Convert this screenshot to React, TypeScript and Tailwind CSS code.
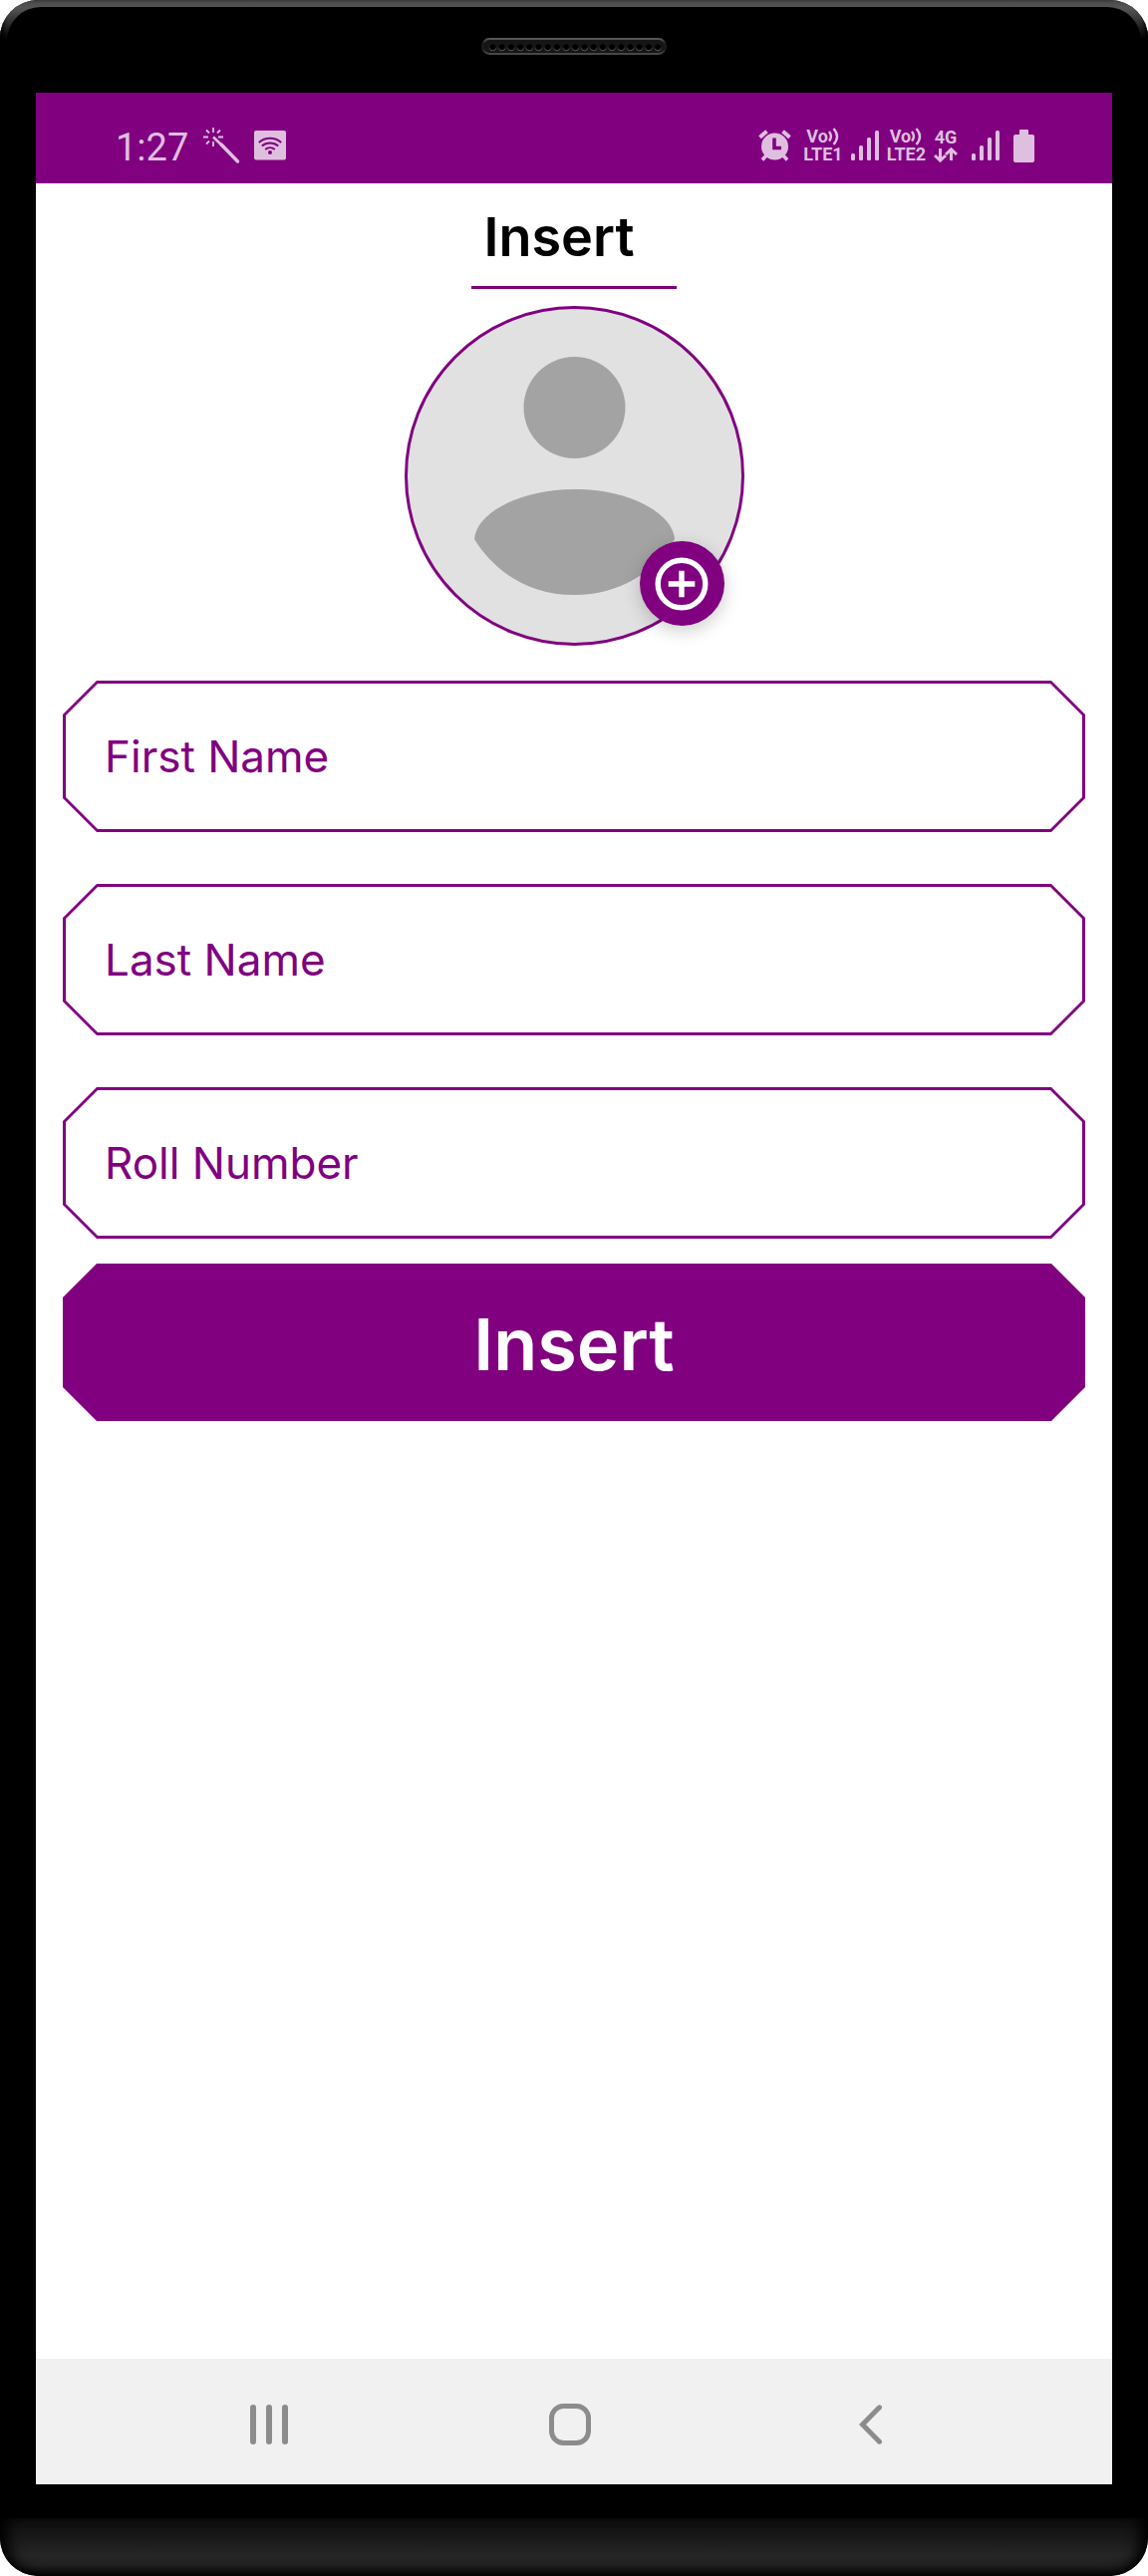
import React from "react";

const CUT_OUTER =
  "[clip-path:polygon(34px_0,calc(100%_-_34px)_0,100%_34px,100%_calc(100%_-_34px),calc(100%_-_34px)_100%,34px_100%,0_calc(100%_-_34px),0_34px)]";
const CUT_INNER =
  "[clip-path:polygon(32px_0,calc(100%_-_32px)_0,100%_32px,100%_calc(100%_-_32px),calc(100%_-_32px)_100%,32px_100%,0_calc(100%_-_32px),0_32px)]";

function Speaker() {
  return (
    <svg width="186" height="18" viewBox="0 0 186 18" aria-hidden="true">
      <defs>
        <linearGradient id="rim" x1="0" y1="0" x2="0" y2="1">
          <stop offset="0" stopColor="#5a5a5a" />
          <stop offset="0.3" stopColor="#1c1c1c" />
          <stop offset="0.7" stopColor="#1c1c1c" />
          <stop offset="1" stopColor="#4a4a4a" />
        </linearGradient>
        <linearGradient id="hole" x1="0" y1="0" x2="0" y2="1">
          <stop offset="0.4" stopColor="#161616" />
          <stop offset="1" stopColor="#606060" />
        </linearGradient>
      </defs>
      <rect x="1" y="1" width="184" height="15" rx="7.5" fill="#161616" stroke="url(#rim)" strokeWidth="2" />
      {Array.from({ length: 19 }, (_, i) => (
        <circle key={i} cx={11.5 + i * 9.2} cy="9.3" r="3.5" fill="#000" stroke="url(#hole)" strokeWidth="1" />
      ))}
    </svg>
  );
}

function Wand() {
  return (
    <svg className="ml-[14px]" width="38" height="38" viewBox="0 0 38 38" fill="none" stroke="currentColor" strokeWidth="1.8" aria-hidden="true">
      <path d="M11 1v5M11 15v5M1 10.500h5M16 10.500h5M4 3.500l3 3M18 3.500l-3 3M4 17.500l3-3" />
      <path d="M11 10.500L22 21" strokeWidth="2.600" />
      <path d="M19 18L35.500 35" strokeWidth="3.400" strokeLinecap="round" />
    </svg>
  );
}

function WifiBadge() {
  return (
    <svg className="ml-[14px]" width="32" height="30" viewBox="0 0 32 30" aria-hidden="true">
      <rect width="32" height="29.500" rx="2" fill="currentColor" />
      <g fill="none" stroke="#800080" strokeWidth="2">
        <path d="M4.800 12A17 17 0 0 1 27.200 12" />
        <path d="M7.800 15.500A12.500 12.500 0 0 1 24.200 15.500" />
        <path d="M11.200 19A7.500 7.500 0 0 1 20.800 19" />
      </g>
      <circle cx="16" cy="22" r="2" fill="#800080" />
    </svg>
  );
}

function Alarm() {
  return (
    <svg width="33" height="33" viewBox="0 0 33 33" fill="none" stroke="currentColor" aria-hidden="true">
      <circle cx="16.500" cy="17" r="13.500" fill="currentColor" stroke="none" />
      <path d="M1.500 7.800L8.500 1.800M31.500 7.800L24.500 1.800" strokeWidth="4" />
      <path d="M8 26L4 30.500M25 26L29 30.500" strokeWidth="3.500" />
      <path d="M16 8.500V18.500H23" stroke="#800080" strokeWidth="3.600" />
    </svg>
  );
}

function Volte({ line }: { line: string }) {
  return (
    <div className="flex flex-col font-bold">
      <div className="flex items-center pl-[3px]">
        <span className="text-[18px] leading-[18px]">Vo</span>
        <svg width="12" height="18" viewBox="0 0 12 18" fill="none" stroke="currentColor" strokeWidth="2.400" aria-hidden="true">
          <path d="M1 4Q4.800 8.800 1 13.500" />
          <path d="M5.500 1Q12.500 9 5.500 17" />
        </svg>
      </div>
      <span className="text-[18px] leading-[18px]">{line}</span>
    </div>
  );
}

function Signal() {
  return (
    <svg width="28" height="32" viewBox="0 0 28 32" fill="currentColor" aria-hidden="true">
      <rect x="0" y="24" width="4" height="7" rx="1.500" />
      <rect x="8" y="16" width="4" height="15" rx="1.500" />
      <rect x="16" y="8" width="4" height="23" rx="1.500" />
      <rect x="24" y="1" width="4" height="30" rx="1.500" />
    </svg>
  );
}

function Data4G() {
  return (
    <div className="flex flex-col items-center font-bold">
      <span className="text-[18px] leading-[18px]">4G</span>
      <svg width="24" height="17" viewBox="0 0 24 17" fill="none" stroke="currentColor" strokeWidth="3" aria-hidden="true">
        <path d="M6.500 2V14M1 9L6.500 14.200L12 9" />
        <path d="M17.500 14V2M12 8L17.500 2.800L23 8" />
      </svg>
    </div>
  );
}

function Battery() {
  return (
    <svg width="21" height="33" viewBox="0 0 21 33" fill="currentColor" aria-hidden="true">
      <rect x="6" y="0" width="9" height="8" rx="1" />
      <rect x="0" y="5" width="21" height="28" rx="2" />
    </svg>
  );
}

function StatusBar() {
  return (
    <div className="flex h-[91px] items-center justify-between bg-[#800080] px-[78px] pt-[15px] font-[Roboto,sans-serif] text-[#dfbfdf]">
      <div className="flex items-center pl-[2px]">
        <span className="pt-1 text-[38px] leading-none">1:27</span>
        <Wand />
        <WifiBadge />
      </div>
      <div className="flex items-center">
        <Alarm />
        <div className="ml-3">
          <Volte line="LTE1" />
        </div>
        <div className="ml-2">
          <Signal />
        </div>
        <div className="ml-2">
          <Volte line="LTE2" />
        </div>
        <div className="ml-2">
          <Data4G />
        </div>
        <div className="ml-[14px]">
          <Signal />
        </div>
        <div className="ml-[14px]">
          <Battery />
        </div>
      </div>
    </div>
  );
}

function Avatar() {
  return (
    <div className="relative size-[341px]">
      <div className="size-full overflow-hidden rounded-full border-[3px] border-[#800080] bg-[#e1e1e1]">
        <svg className="size-full" viewBox="0 0 335 335" fill="#a3a3a3" role="img" aria-label="Profile picture">
          <circle cx="167.500" cy="99" r="51" />
          <path d="M67 231C69 205 112 181 167.500 181S266 205 268 231C247 265 212 287 167.500 287S88 265 67 231Z" />
        </svg>
      </div>
      <button
        type="button"
        aria-label="Add photo"
        className="absolute right-5 bottom-5 flex size-[85px] items-center justify-center rounded-full bg-[#800080] shadow-[0_5px_18px_rgba(0,0,0,0.2)]"
      >
        <svg width="54" height="54" viewBox="0 0 54 54" fill="none" stroke="#fff" strokeWidth="5.400" aria-hidden="true">
          <circle cx="27" cy="27" r="23.800" />
          <path d="M27 13.700V40.300M13.700 27H40.300" />
        </svg>
      </button>
    </div>
  );
}

function Field({ id, label }: { id: string; label: string }) {
  return (
    <div className={`bg-[#800080] p-[3px] ${CUT_OUTER}`}>
      <input
        id={id}
        name={id}
        type="text"
        aria-label={label}
        placeholder={label}
        className={`block h-[146px] w-full bg-white px-[39px] text-[44px] text-[#800080] outline-none placeholder:text-[#800080] placeholder:opacity-100 ${CUT_INNER}`}
      />
    </div>
  );
}

function NavBar() {
  return (
    <nav className="flex h-[126px] items-stretch justify-center gap-[2px] bg-[#f1f1f1] pt-[6px] pr-2 text-[#8c8c8c]">
      <button type="button" aria-label="Recent apps" className="flex w-[28%] items-center justify-center">
        <svg width="38" height="40" viewBox="0 0 38 40" fill="currentColor" aria-hidden="true">
          <rect x="0" y="0" width="6" height="40" rx="3" />
          <rect x="16" y="0" width="6" height="40" rx="3" />
          <rect x="32" y="0" width="6" height="40" rx="3" />
        </svg>
      </button>
      <button type="button" aria-label="Home" className="flex w-[28%] items-center justify-center">
        <svg width="42" height="42" viewBox="0 0 42 42" fill="none" stroke="currentColor" strokeWidth="5" aria-hidden="true">
          <rect x="2.500" y="2.500" width="37" height="37" rx="12" />
        </svg>
      </button>
      <button type="button" aria-label="Back" className="flex w-[28%] items-center justify-center">
        <svg width="24" height="40" viewBox="0 0 24 40" fill="none" stroke="currentColor" strokeWidth="5" strokeLinecap="round" aria-hidden="true">
          <path d="M20.500 2.800L3.500 20L20.500 37.200" />
        </svg>
      </button>
    </nav>
  );
}

export default function App() {
  return (
    <div className="min-h-screen bg-white font-[Inter,sans-serif]">
      <div className="flex min-h-screen flex-col overflow-hidden rounded-[38px] bg-black">
        <div className="h-[93px] bg-[linear-gradient(to_bottom,#484848_0,#555_8px,#000_40px)] px-[7px] pt-[7px] shadow-[inset_6px_0_5px_-3px_#000,inset_-6px_0_5px_-3px_#000]">
          <div className="flex h-full justify-center rounded-t-[34px] bg-black pt-[31px]">
            <Speaker />
          </div>
        </div>

        <div className="mx-9 flex grow flex-col bg-white">
          <StatusBar />
          <main className="flex grow flex-col items-center px-[27px]">
            <h1 className="border-b-[3px] border-[#800080] pt-1 pr-[42px] pl-3 text-[54px] leading-[99px] font-semibold text-black">
              Insert
            </h1>
            <div className="mt-[17px]">
              <Avatar />
            </div>
            <form className="mt-[35px] flex w-full flex-col" onSubmit={(e) => e.preventDefault()}>
              <div className="flex flex-col gap-[52px]">
                <Field id="first-name" label="First Name" />
                <Field id="last-name" label="Last Name" />
                <Field id="roll-number" label="Roll Number" />
              </div>
              <button
                type="submit"
                className={`mt-[25px] h-[158px] w-full bg-[#800080] pt-1 text-[72px] font-semibold text-white ${CUT_OUTER}`}
              >
                Insert
              </button>
            </form>
          </main>
          <NavBar />
        </div>

        <div className="h-[34px]" />
        <div className="h-[58px] rounded-b-[38px] bg-[linear-gradient(to_bottom,#0d0d0d_0,#1b1b1b_40%,#262626_64%,#202020_82%,#050505_100%)] shadow-[inset_14px_0_14px_-6px_#000,inset_-14px_0_14px_-6px_#000]" />
      </div>
    </div>
  );
}
